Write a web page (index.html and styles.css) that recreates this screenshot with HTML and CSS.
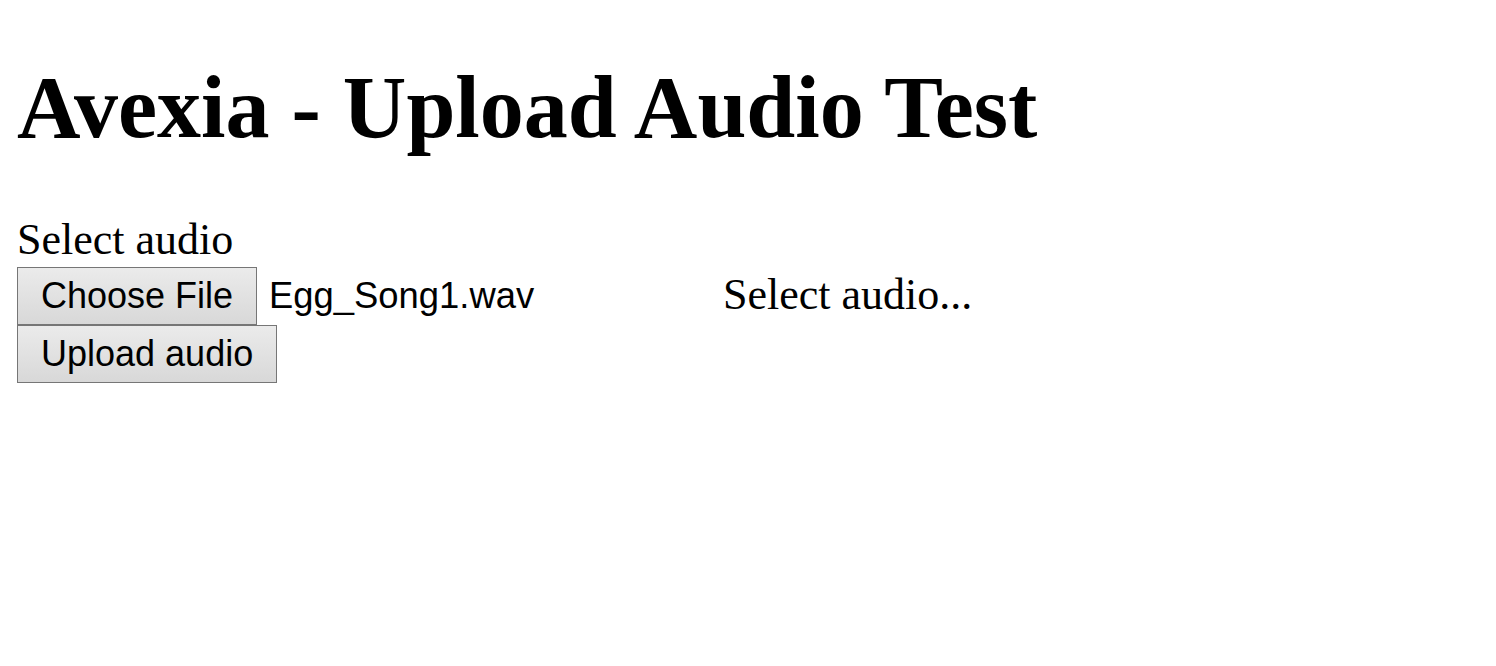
FILE: index.html
```html
<!DOCTYPE html>
<html>
<head>
<meta charset="utf-8">
<title>Avexia - Upload Audio Test</title>
<link rel="stylesheet" href="styles.css">
</head>
<body>
<main class="page">
  <h1 class="title">Avexia - Upload Audio Test</h1>
  <form class="upload-form">
    <label class="field-label">Select audio</label>
    <div class="file-row">
      <div class="file-input">
        <span class="btn">Choose File</span>
        <span class="file-name">Egg_Song1.wav</span>
      </div>
      <span class="status">Select audio...</span>
    </div>
    <div class="actions">
      <button type="button" class="btn">Upload audio</button>
    </div>
  </form>
</main>
</body>
</html>
```

FILE: styles.css
```css
html, body {
  margin: 0;
  padding: 0;
  background: #ffffff;
}

.page {
  padding: 0 17px;
  font-family: "Liberation Serif", "Times New Roman", serif;
  font-size: 44px;
  color: #000;
}

.title {
  margin: 57px 0 55px 0;
  font-size: 88px;
  font-weight: bold;
  line-height: normal;
}

.upload-form {
  display: flex;
  flex-direction: column;
  align-items: flex-start;
}

.field-label {
  display: block;
  line-height: 54px;
}

.file-row {
  display: flex;
  align-items: center;
}

.file-input {
  display: flex;
  align-items: center;
  width: 695px;
}

.btn {
  display: inline-block;
  box-sizing: border-box;
  font-family: "Liberation Sans", Arial, sans-serif;
  font-size: 36px;
  line-height: 41px;
  padding: 7px 23px 8px 23px;
  border: 1px solid #767676;
  border-radius: 0;
  background: linear-gradient(#ebebeb, #d8d8d8);
  color: #000;
  margin: 0;
}

.file-name {
  font-family: "Liberation Sans", Arial, sans-serif;
  font-size: 36.4px;
  margin-left: 12px;
}

.status {
  margin-left: 11px;
  line-height: normal;
  position: relative;
  top: -2px;
}

.actions {
  display: flex;
}
```
